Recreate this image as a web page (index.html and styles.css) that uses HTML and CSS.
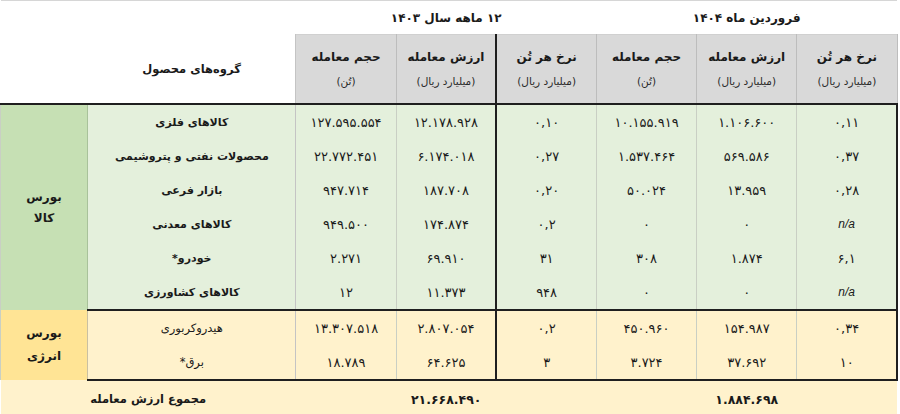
FILE: index.html
```html
<!DOCTYPE html>
<html lang="fa">
<head>
<meta charset="utf-8">
<title>جدول معاملات بورس</title>
<link rel="stylesheet" href="styles.css">
</head>
<body>
<table class="tbl">
  <colgroup>
    <col class="c-label"><col class="c-prod">
    <col class="c-num"><col class="c-num"><col class="c-num">
    <col class="c-num"><col class="c-num"><col class="c-num">
  </colgroup>
  <thead>
    <tr class="r-title">
      <th class="h-top" colspan="2"></th>
      <th class="h-period" colspan="3"><span class="t">۱۲ ماهه سال ۱۴۰۳</span></th>
      <th class="h-period" colspan="3"><span class="t">فروردین ماه ۱۴۰۴</span></th>
    </tr>
    <tr class="r-sub">
      <th class="h-blank"></th>
      <th class="h-blank h-group">گروه‌های محصول</th>
      <th class="h-col"><b>حجم معامله</b><span>(تُن)</span></th>
      <th class="h-col"><b>ارزش معامله</b><span>(میلیارد ریال)</span></th>
      <th class="h-col divider"><b>نرخ هر تُن</b><span>(میلیارد ریال)</span></th>
      <th class="h-col"><b>حجم معامله</b><span>(تُن)</span></th>
      <th class="h-col"><b>ارزش معامله</b><span>(میلیارد ریال)</span></th>
      <th class="h-col edge"><b>نرخ هر تُن</b><span>(میلیارد ریال)</span></th>
    </tr>
  </thead>
  <tbody class="g-kala">
    <tr>
      <td class="lab" rowspan="6"><span>بورس</span><span>کالا</span></td>
      <td class="prod">کالاهای فلزی</td>
      <td>۱۲۷.۵۹۵.۵۵۴</td><td>۱۲.۱۷۸.۹۲۸</td><td class="divider">۰,۱۰</td>
      <td>۱۰.۱۵۵.۹۱۹</td><td>۱.۱۰۶.۶۰۰</td><td class="edge">۰,۱۱</td>
    </tr>
    <tr>
      <td class="prod">محصولات نفتی و پتروشیمی</td>
      <td>۲۲.۷۷۲.۴۵۱</td><td>۶.۱۷۴.۰۱۸</td><td class="divider">۰,۲۷</td>
      <td>۱.۵۳۷.۴۶۴</td><td>۵۶۹.۵۸۶</td><td class="edge">۰,۳۷</td>
    </tr>
    <tr>
      <td class="prod">بازار فرعی</td>
      <td>۹۴۷.۷۱۴</td><td>۱۸۷.۷۰۸</td><td class="divider">۰,۲۰</td>
      <td>۵۰.۰۲۴</td><td>۱۳.۹۵۹</td><td class="edge">۰,۲۸</td>
    </tr>
    <tr>
      <td class="prod">کالاهای معدنی</td>
      <td>۹۴۹.۵۰۰</td><td>۱۷۴.۸۷۴</td><td class="divider">۰,۲</td>
      <td>۰</td><td>۰</td><td class="edge na">n/a</td>
    </tr>
    <tr>
      <td class="prod">خودرو*</td>
      <td>۲.۲۷۱</td><td>۶۹.۹۱۰</td><td class="divider">۳۱</td>
      <td>۳۰۸</td><td>۱.۸۷۴</td><td class="edge">۶,۱</td>
    </tr>
    <tr class="last">
      <td class="prod">کالاهای کشاورزی</td>
      <td>۱۲</td><td>۱۱.۳۷۳</td><td class="divider">۹۴۸</td>
      <td>۰</td><td>۰</td><td class="edge na">n/a</td>
    </tr>
  </tbody>
  <tbody class="g-energy">
    <tr>
      <td class="lab" rowspan="2"><span>بورس</span><span>انرژی</span></td>
      <td class="prod light">هیدروکربوری</td>
      <td>۱۳.۳۰۷.۵۱۸</td><td>۲.۸۰۷.۰۵۴</td><td class="divider">۰,۲</td>
      <td>۴۵۰.۹۶۰</td><td>۱۵۴.۹۸۷</td><td class="edge">۰,۳۴</td>
    </tr>
    <tr class="last">
      <td class="prod light">برق*</td>
      <td>۱۸.۷۸۹</td><td>۶۴.۶۲۵</td><td class="divider">۳</td>
      <td>۳.۷۲۴</td><td>۳۷.۶۹۲</td><td class="edge">۱۰</td>
    </tr>
  </tbody>
  <tfoot>
    <tr class="r-total">
      <td colspan="2">مجموع ارزش معامله</td>
      <td colspan="3">۲۱.۶۶۸.۴۹۰</td>
      <td colspan="3">۱.۸۸۴.۶۹۸</td>
    </tr>
  </tfoot>
</table>
</body>
</html>
```

FILE: styles.css
```css
html, body {
  margin: 0;
  padding: 0;
  background: #ffffff;
}

body {
  font-family: "DejaVu Sans", "Noto Sans", sans-serif;
  color: #1a1a1a;
  font-size: 12px;
}

.tbl {
  width: 898px;
  border-collapse: collapse;
  table-layout: fixed;
  border-top: 1px solid #d6d6d6;
}

.c-label { width: 87px; }
.c-prod { width: 208px; }
.c-num { width: 100px; }

.tbl th,
.tbl td {
  padding: 0;
  text-align: center;
  vertical-align: middle;
  direction: rtl;
}

/* header */
.r-title th {
  height: 33px;
  font-size: 12px;
  font-weight: bold;
  background: #ffffff;
}

.r-title .t {
  display: inline-block;
  direction: rtl;
  unicode-bidi: isolate;
}

.r-sub th {
  height: 68px;
  background: #d9d9d9;
  border-left: 1px solid #bdbdbd;
  border-right: 1px solid #bdbdbd;
  border-bottom: 2px solid #1f1f1f;
  border-top: 1px solid #d0d0d0;
  font-weight: normal;
}

.r-sub th.h-blank {
  background: #ffffff;
  border-left: none;
  border-top: none;
  border-right: none;
}

.r-sub th.h-group {
  border-right: 1px solid #c4c4c4;
  font-size: 11.5px;
  font-weight: bold;
}

.h-col b {
  display: block;
  font-size: 12px;
  font-weight: bold;
  line-height: 24px;
}

.h-col span {
  display: block;
  font-size: 10.5px;
  line-height: 24px;
  color: #2a2a2a;
}

.tbl .divider {
  border-left: 2px solid #1f1f1f;
}

.tbl .edge {
  border-right: 1px solid #bdbdbd;
}

/* body rows */
.tbl tbody td {
  height: 34px;
  font-size: 13px;
  border-left: 1px solid #c9cfc4;
}

.g-kala td { background: #e4f0dc; }
.g-kala td.lab { background: #c6e0b4; border-right: 1px solid #a8c29a; }
.g-energy td { background: #fff2cc; }
.g-energy td.lab { background: #ffe495; border-right: 1px solid #c9c0a2; }

.g-kala td.edge,
.g-energy td.edge {
  border-right: 2px solid #1f1f1f;
}

.tbl tbody td.divider {
  border-left: 2px solid #1f1f1f;
}

.tbl tbody td.prod {
  font-weight: bold;
  font-size: 11px;
  border-left: 1px solid #a8c29a;
  border-right: 1px solid #c4c4c4;
}

.g-energy td.prod { border-left-color: #c9c0a2; }

.tbl tbody td.light {
  font-weight: normal;
  font-size: 11.5px;
}

.tbl tbody td.lab {
  font-weight: bold;
  font-size: 12px;
  line-height: 21px;
}

.lab span {
  display: block;
}

.tbl .g-energy td.lab { line-height: 23px; }

.tbl tbody tr.last td {
  border-bottom: 2px solid #1f1f1f;
}

.tbl tbody td.na {
  font-family: "Liberation Sans", Arial, sans-serif;
  font-style: italic;
  font-size: 12px;
  direction: ltr;
}

/* total */
.r-total td {
  height: 36px;
  background: #fff2cc;
  font-weight: bold;
  font-size: 11.5px;
}

.r-total td + td {
  font-size: 12.5px;
}
```
